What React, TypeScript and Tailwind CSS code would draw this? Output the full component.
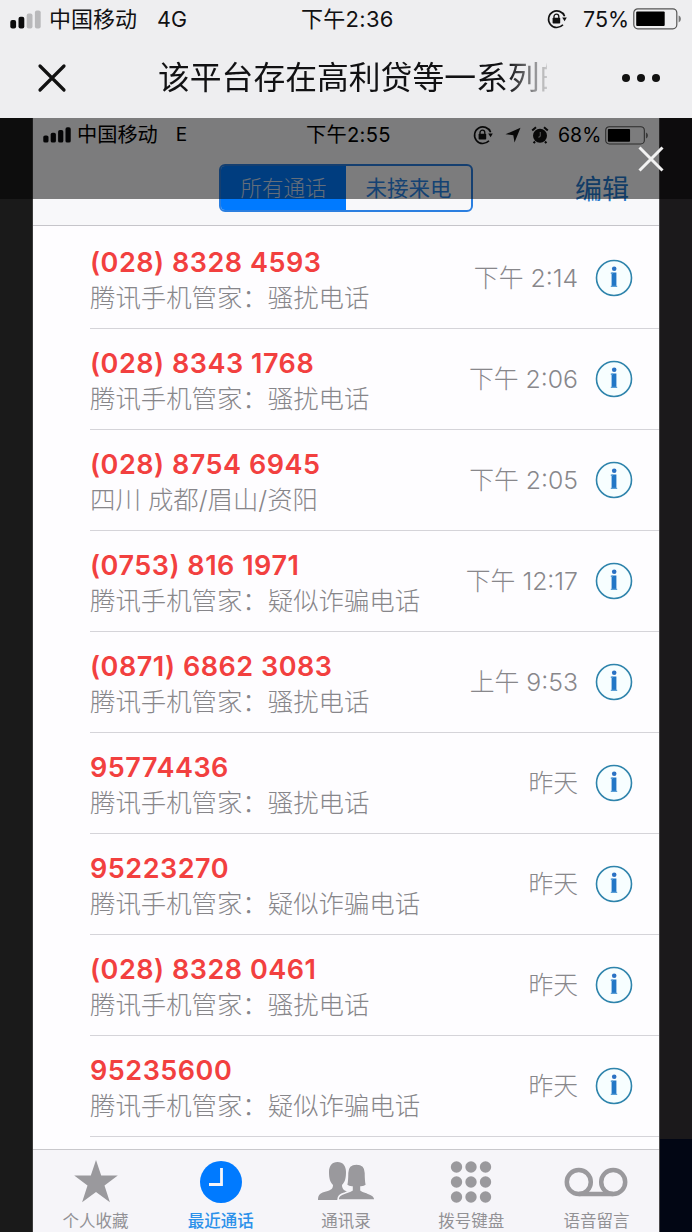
import clsx from 'clsx'
import type { ReactNode } from 'react'

const calls = [
  { number: '(028) 8328 4593', label: '腾讯手机管家：骚扰电话', time: '下午 2:14' },
  { number: '(028) 8343 1768', label: '腾讯手机管家：骚扰电话', time: '下午 2:06' },
  { number: '(028) 8754 6945', label: '四川 成都/眉山/资阳', time: '下午 2:05' },
  { number: '(0753) 816 1971', label: '腾讯手机管家：疑似诈骗电话', time: '下午 12:17' },
  { number: '(0871) 6862 3083', label: '腾讯手机管家：骚扰电话', time: '上午 9:53' },
  { number: '95774436', label: '腾讯手机管家：骚扰电话', time: '昨天' },
  { number: '95223270', label: '腾讯手机管家：疑似诈骗电话', time: '昨天' },
  { number: '(028) 8328 0461', label: '腾讯手机管家：骚扰电话', time: '昨天' },
  { number: '95235600', label: '腾讯手机管家：疑似诈骗电话', time: '昨天' },
]

function Signal({ strength, className }: { strength: number; className: string }) {
  return (
    <svg viewBox="0 0 31 19" className={className} preserveAspectRatio="none">
      {[0, 1, 2, 3].map((i) => (
        <rect
          key={i}
          x={i * 8.2 + 0.3}
          y={10 - i * 3.2}
          width="5.8"
          height={8.5 + i * 3.2}
          rx="2"
          fill={i < strength ? '#0b0b0c' : '#b9b9bb'}
        />
      ))}
    </svg>
  )
}

function RotationLock() {
  return (
    <svg viewBox="0 0 20 20" className="h-5 w-5 shrink-0" fill="none">
      <path d="M17.6 7.2A8.3 8.3 0 1 0 16 15.8" stroke="#111" strokeWidth="1.6" />
      <path d="M15.2 8.6h4.6l-2.2 3.6z" fill="#111" />
      <rect x="5.6" y="8.8" width="7.6" height="5.8" rx=".8" fill="#111" />
      <path d="M7 9V7.6a2.4 2.4 0 0 1 4.8 0V9" stroke="#111" strokeWidth="1.3" />
    </svg>
  )
}

function Battery({ level, className }: { level: number; className: string }) {
  return (
    <svg viewBox="0 0 49 22" className={className} preserveAspectRatio="none">
      <rect x=".8" y=".8" width="43" height="20" rx="4" fill="none" stroke="#555" strokeWidth="1.2" />
      <path d="M45.6 7.6c3 1 3 5.8 0 6.8z" fill="#777" />
      <rect x="3.2" y="3.6" width={level * 38} height="14.5" rx="1" fill="#000" />
    </svg>
  )
}

function Info() {
  return (
    <svg viewBox="0 0 38 38" className="h-[38px] w-[38px] shrink-0">
      <circle cx="19" cy="19" r="17.5" fill="#f7feff" stroke="#2f84ac" strokeWidth="1.6" />
      <circle cx="19.2" cy="9.8" r="2.3" fill="#2a72c4" />
      <path d="M16.6 13.600h4.800v14.400h-4.800z" fill="#2277c6" />
      <path d="M15.800 13.600h2v1.300h-2zM15.800 26.700h6.400v1.300h-6.400z" fill="#5b9fd6" />
    </svg>
  )
}

function Tab({ label, active, children }: { label: string; active?: boolean; children: ReactNode }) {
  return (
    <div
      className={clsx(
        'flex flex-1 flex-col items-center pt-2.5',
        active ? 'text-[#007aff]' : 'text-[#9a999d]',
      )}
    >
      <svg viewBox="0 0 66 44" className="h-11 w-[66px]" fill="currentColor">
        {children}
      </svg>
      <span
        className={clsx(
          'mt-[7px] text-[16.5px] leading-5 whitespace-nowrap',
          active ? 'font-medium text-[#2c91ea]' : 'text-[#929195]',
        )}
      >
        {label}
      </span>
    </div>
  )
}

export default function App() {
  return (
    <div className="flex h-[1232px] w-[692px] flex-col overflow-hidden bg-[#1a1a1a] font-[Inter,'Noto_Sans_CJK_SC',sans-serif]">
      <header className="h-[118px] shrink-0 bg-[#eeeef0] text-[#111113]">
        <div className="grid h-[38px] grid-cols-[301px_1fr_145px] items-center text-[22px] leading-8 whitespace-nowrap">
          <div className="flex items-center pl-2.5">
            <Signal strength={2} className="h-[19px] w-[31px]" />
            <span className="ml-2">中国移动</span>
            <span className="ml-5 text-[21.5px]">4G</span>
          </div>
          <span className="tracking-[0.3px]">下午2:36</span>
          <div className="flex items-center">
            <RotationLock />
            <span className="ml-[16px] w-[50px] text-[21.5px]">75%</span>
            <Battery level={0.75} className="h-[22px] w-[49px]" />
          </div>
        </div>

        <div className="flex h-20 items-center pl-[37px]">
          <svg viewBox="0 0 30 30" className="h-[30px] w-[30px]" stroke="#111" strokeWidth="3.2" strokeLinecap="round">
            <path d="M3 3l24 24M27 3L3 27" />
          </svg>
          <h1 className="ml-[91px] w-[389px] overflow-hidden text-[31.8px] leading-10 whitespace-nowrap [mask-image:linear-gradient(to_right,black_350px,transparent_396px)]">
            该平台存在高利贷等一系列的
          </h1>
          <div className="ml-[75px] flex gap-[7px]">
            <i className="h-2 w-2 rounded-full bg-[#111]" />
            <i className="h-2 w-2 rounded-full bg-[#111]" />
            <i className="h-2 w-2 rounded-full bg-[#111]" />
          </div>
        </div>
      </header>

      <main className="relative grid grow grid-cols-[33px_626px_33px]">
        <div className="border-r border-[#3b3b3b] bg-[#1a1a1a]" />

        <div className="flex flex-col bg-[#fefdff]">
          <div className="h-[108px] border-b border-[#c6c5ca] bg-[#f8f8fa]">
            <div className="grid h-[34px] grid-cols-[273px_1fr_186px] items-center text-[20.2px] leading-8 whitespace-nowrap text-black">
              <div className="flex items-center pl-2.5">
                <Signal strength={4} className="h-4 w-7" />
                <span className="ml-1.5">中国移动</span>
                <span className="ml-[18px] text-[19px]">E</span>
              </div>
              <span className="tracking-[0.3px]">下午2:55</span>
              <div className="flex items-center">
                <RotationLock />
                <svg viewBox="0 0 16 16" className="ml-3 h-4 w-4">
                  <path d="M15.5.8L9.5 15.5 8.3 8.3.5 7.2z" fill="#111" />
                </svg>
                <svg viewBox="0 0 18 18" className="ml-2.5 h-[18px] w-[18px]" fill="#111">
                  <circle cx="9" cy="9.8" r="7" />
                  <path d="M1.2 4.5L5 1.2M16.8 4.5L13 1.2M4 15.5l-1.4 1.7M14 15.5l1.4 1.7" stroke="#111" strokeWidth="2" />
                  <path d="M9.3 6v4L7.5 11.5" fill="none" stroke="#999" strokeWidth="1.2" />
                </svg>
                <span className="ml-[9px] w-[47px] text-[19.5px]">68%</span>
                <Battery level={0.65} className="h-[19px] w-[44px]" />
              </div>
            </div>
            <div className="mt-3 flex pl-[186px] leading-none whitespace-nowrap">
              <div className="flex h-12 w-[254px] overflow-hidden rounded-md border-2 border-[#2b7fe0] text-[21.5px]">
                <span className="flex w-[125px] items-center justify-center bg-[#007aff] pt-0.5 font-light text-[#c9dcf5]">
                  所有通话
                </span>
                <span className="flex flex-1 items-center justify-center pt-0.5 text-[#2b84e6]">未接来电</span>
              </div>
              <span className="ml-[102px] self-center pt-0.5 text-[27px] text-[#2478cc]">编辑</span>
            </div>
          </div>

          <ul className="grow pt-0.5">
            {calls.map((call) => (
              <li key={call.number} className="ml-[57px] flex h-[101px] items-center border-b border-[#d5d4d9]">
                <div className="grow pt-[5px] whitespace-nowrap">
                  <p className="text-[27px] leading-[34px] font-semibold tracking-[0.52px] text-[#f2403f]">{call.number}</p>
                  <p className="text-[25.4px] leading-[35px] font-light text-[#87868a]">{call.label}</p>
                </div>
                <span className="pt-0.5 text-[24.8px] font-light whitespace-nowrap text-[#88878b]">{call.time}</span>
                <span className="mr-[26px] ml-[17px]">
                  <Info />
                </span>
              </li>
            ))}
          </ul>

          <nav className="flex h-[83px] shrink-0 border-t border-[#c9c8cc] bg-[#f6f5f9]">
            <Tab label="个人收藏">
              <path d="M33 0l5.2 15.5h16.6L41.5 25.4l5.4 16.800L33 32 19.100 42.200l5.400-16.800L11.200 15.500h16.600z" />
            </Tab>
            <Tab label="最近通话" active>
              <circle cx="33" cy="22" r="21" />
              <path d="M33.5 8v16.500H21" fill="none" stroke="#f6f5f9" strokeWidth="2.8" />
            </Tab>
            <Tab label="通讯录">
              <path d="M24.500 2C30 2 33 6 33 12c0 6-1 10-4 13 0 4 2 5.500 6 7l7 8H5c0-6 3-7 8-8.500 5-1.500 7-2.500 7-6.500-3-3-4-7-4-13 0-6 3-10 8.500-10z" />
              <path d="M43.500 4C50 4 52.500 7 52.500 13c0 5 0 8 1 12-1.500 1.500-3.500 2-5.500 2v3c2 1.500 4 2 6.500 3 5 1.500 7.500 3 7.500 7H25c0-4 2-5.500 7-7 3-1 5-1.500 7-3v-3c-2 0-4-.5-5.500-2 1-4 1-7 1-12C34.500 7 37 4 43.500 4z" stroke="#f6f5f9" strokeWidth="1.600" />
              <path d="M4 40.200h58v3H4z" fill="#f6f5f9" />
            </Tab>
            <Tab label="拨号键盘">
              {[7, 22, 37].map((y) =>
                [18.5, 33, 47.5].map((x) => <circle key={`${x}-${y}`} cx={x} cy={y} r="5.7" />),
              )}
            </Tab>
            <Tab label="语音留言">
              <g fill="none" stroke="currentColor" strokeWidth="4.5">
                <circle cx="15.8" cy="22" r="12" />
                <circle cx="50.2" cy="22" r="12" />
                <path d="M15.8 34h34.4" />
              </g>
            </Tab>
          </nav>
        </div>

        <div className="flex flex-col border-l border-[#4a494b] bg-[#1b191b]">
          <div className="mt-auto h-[93px] bg-[#020614]" />
        </div>

        {/* dimmed viewer toolbar */}
        <div className="absolute inset-x-0 top-0 h-[81px] bg-black/50">
          <svg viewBox="0 0 28 28" className="absolute top-[27px] left-[637px] h-7 w-7" stroke="#f2f2f2" strokeWidth="3">
            <path d="M2.5 2.5l23 23M25.5 2.5l-23 23" />
          </svg>
        </div>
      </main>
    </div>
  )
}
